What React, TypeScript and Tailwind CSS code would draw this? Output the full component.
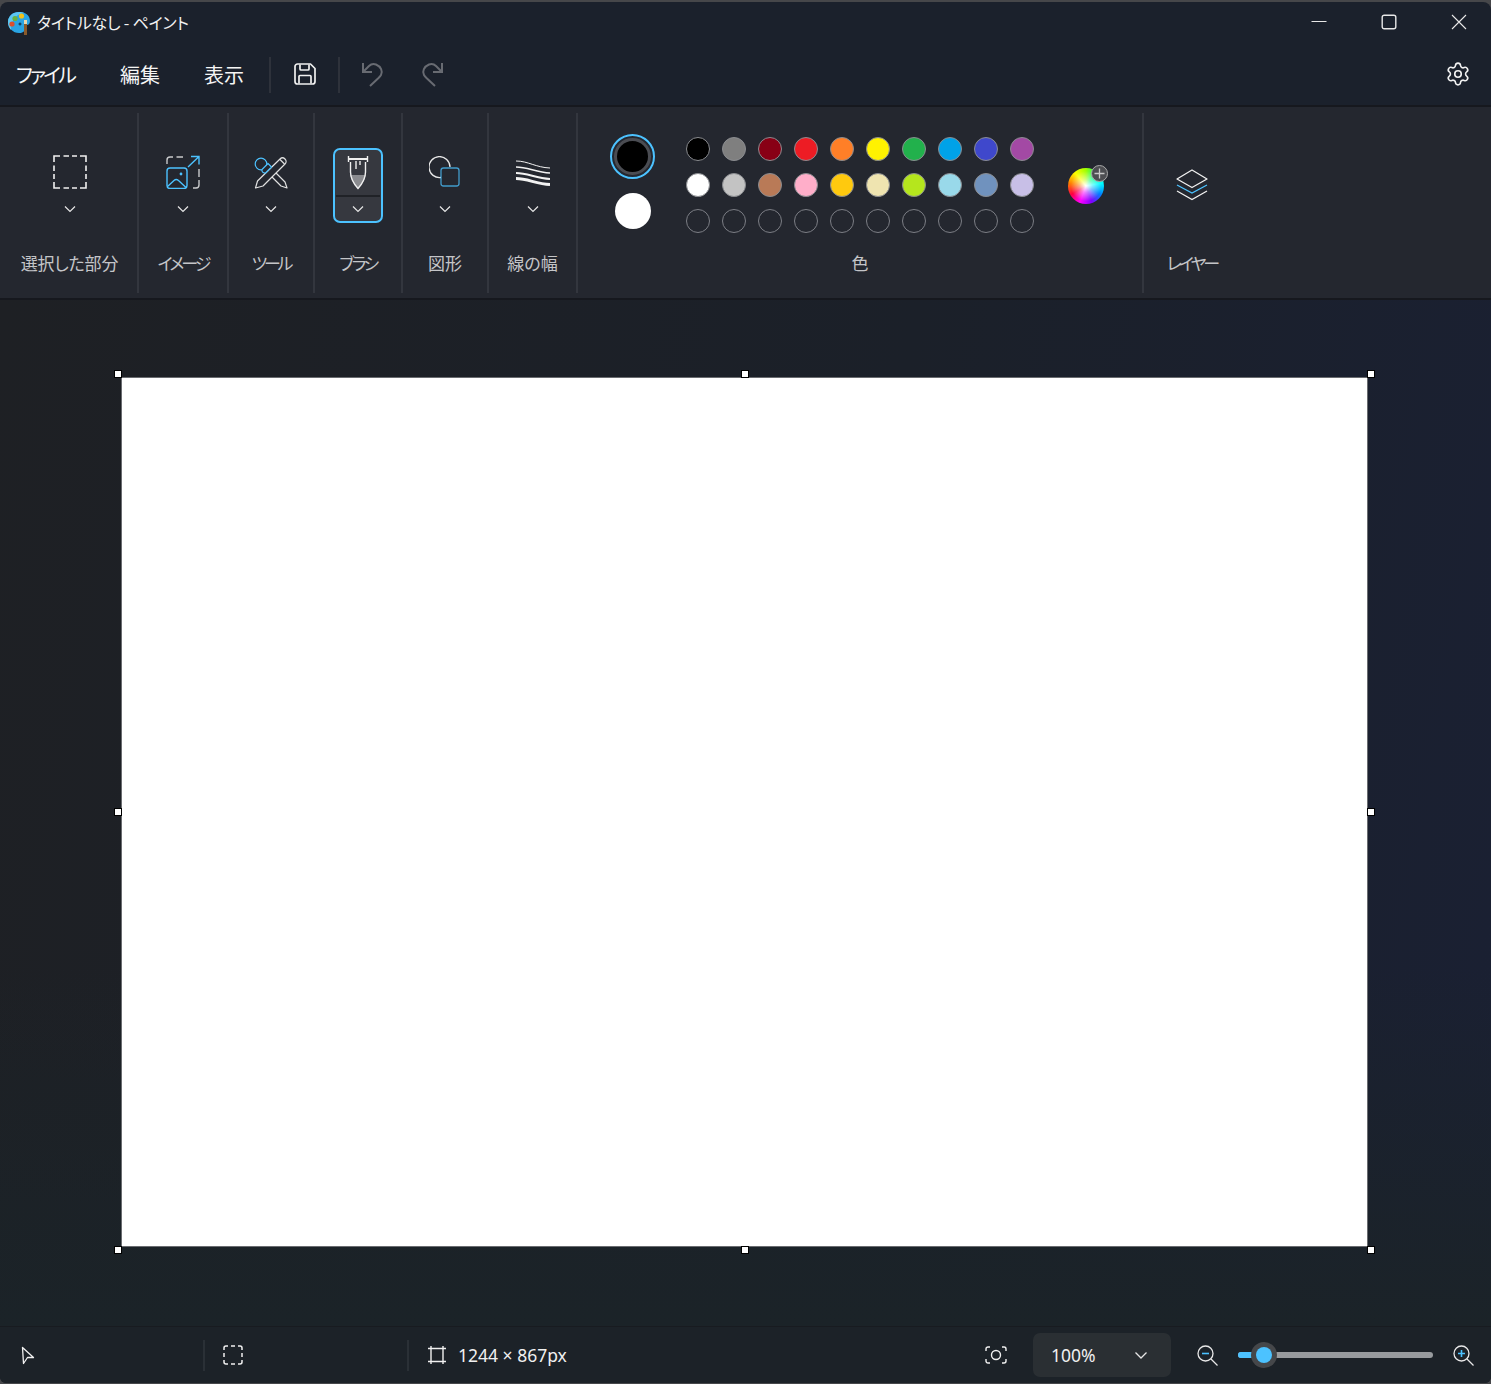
import React from "react";
import { Settings } from "lucide-react";

const chevron = (
  <svg width="12" height="8" viewBox="0 0 12 8" fill="none" stroke="#e6e6e6" strokeWidth="1.2">
    <path d="M1 1.5l5 5 5-5" />
  </svg>
);

function Group({ w, label, icon, extra }: { w: string; label: string; icon: React.ReactNode; extra?: string }) {
  return (
    <div className={`${w} h-[180px] flex flex-col items-center shrink-0 border-r-2 border-[#33363e]`}>
      <div className="h-[36px] mt-[41px] flex items-center justify-center">{icon}</div>
      <div className="h-[12px] mt-[13px] flex items-center justify-center">{chevron}</div>
      <div className={`mt-[36px] text-[17px] leading-[24px] text-[#c4c5c8] whitespace-nowrap ${extra ?? ""}`}>{label}</div>
    </div>
  );
}

const row1 = ["#000000", "#7f7f7f", "#880015", "#ed1c24", "#ff7f27", "#fff200", "#22b14c", "#00a2e8", "#3f48cc", "#a349a4"];
const row2 = ["#ffffff", "#c3c3c3", "#b97a57", "#ffaec9", "#ffc90e", "#efe4b0", "#b5e61d", "#99d9ea", "#7092be", "#c8bfe7"];

function Handle({ pos }: { pos: string }) {
  return <div className={`absolute w-[8px] h-[8px] bg-white border border-black ${pos}`} />;
}

export default function App() {
  return (
    <div
      className="w-[1491px] h-[1384px] bg-[#46474a] pt-[2px] pb-[1px] text-white overflow-hidden"
      style={{ fontFamily: '"Noto Sans CJK JP", "Noto Sans", sans-serif', fontFeatureSettings: '"palt"' }}
    >
      <div className="h-full rounded-t-[8px] rounded-b-[6px] overflow-hidden flex flex-col bg-[#1b212c]">
        {/* title bar */}
        <div className="h-[40px] flex items-center shrink-0">
          <div className="ml-[7px] mt-[2px]">
            <svg width="24" height="26" viewBox="0 0 24 26">
              <path d="M1 12C1 6 6 2 12 2c6 0 11 3 11 9 0 3-2 4-3 4v0c-2 0-2 1-2 3 0 3-2 5-6 5C6 23 1 18 1 12z" fill="#29a4e4" />
              <path d="M1 12C1 6 6 2 12 2c2 0 4 .3 5 1C10 4 4 9 4 20 2 18 1 15 1 12z" fill="#5cc6f2" />
              <circle cx="5" cy="14" r="2.6" fill="#d9502e" />
              <circle cx="8" cy="8.5" r="2.6" fill="#6ab23e" />
              <circle cx="14.5" cy="6" r="2.6" fill="#f2c21a" />
              <path d="M11.5 14h3M13 12.5v3" stroke="#123" strokeWidth="1" />
              <rect x="17" y="10" width="3" height="4" fill="#e8d9b0" />
              <rect x="17" y="14" width="3" height="11" fill="#8a5a2b" />
            </svg>
          </div>
          <div className="ml-[6px] text-[16px] tracking-[-0.2px] leading-[24px] text-[#f2f2f2] whitespace-nowrap">タイトルなし - ペイント</div>
          <div className="ml-auto flex items-center gap-[54px] pr-[24px]">
            <svg width="16" height="16" viewBox="0 0 16 16" stroke="#e8e8e8" strokeWidth="1" fill="none">
              <path d="M0.5 7.5h15" />
            </svg>
            <svg width="16" height="16" viewBox="0 0 16 16" stroke="#e8e8e8" strokeWidth="1.4" fill="none">
              <rect x="1.2" y="1.2" width="13.6" height="13.6" rx="2" />
            </svg>
            <svg width="16" height="16" viewBox="0 0 16 16" stroke="#e8e8e8" strokeWidth="1.1" fill="none">
              <path d="M1 1l14 14M15 1L1 15" />
            </svg>
          </div>
        </div>

        {/* menu bar */}
        <div className="h-[63px] flex items-center shrink-0 text-[20px] text-[#f5f5f5]">
          <div className="ml-[16px] w-[104px] mt-[3px] leading-[28px] tracking-[-2.8px]">ファイル</div>
          <div className="w-[84px] mt-[3px] leading-[28px]">編集</div>
          <div className="w-[65px] mt-[3px] leading-[28px]">表示</div>
          <div className="w-[2px] h-[36px] bg-[#2e323b] mt-[3px]" />
          <div className="w-[67px] flex justify-center">
            <svg width="24" height="24" viewBox="0 0 24 24" fill="none" stroke="#f0f0f0" strokeWidth="1.7" strokeLinejoin="round">
              <path d="M4.5 2h13l4.5 4.5V19.5a2.5 2.5 0 0 1-2.5 2.5h-15A2.5 2.5 0 0 1 2 19.5v-15A2.5 2.5 0 0 1 4.5 2z" />
              <path d="M7 2.5v4.5a1 1 0 0 0 1 1h7a1 1 0 0 0 1-1V2.5M6 21.5v-7a1 1 0 0 1 1-1h10a1 1 0 0 1 1 1v7" />
            </svg>
          </div>
          <div className="w-[2px] h-[36px] bg-[#2e323b] mt-[3px]" />
          <div className="ml-[21px]">
            <svg width="24" height="26" viewBox="0 0 24 26" fill="none" stroke="#686b72" strokeWidth="2">
              <path d="M2 2v9h9" />
              <path d="M2.5 10.5L8 5c2-2 4.5-2.5 7-1.500 5 2 7 7 5 10.500-.7 1.200-1.500 2-2.500 3L9 25" />
            </svg>
          </div>
          <div className="ml-[35px]">
            <svg width="24" height="26" viewBox="0 0 24 26" fill="none" stroke="#686b72" strokeWidth="2">
              <path d="M22 2v9h-9" />
              <path d="M21.500 10.500L16 5c-2-2-4.500-2.500-7-1.500-5 2-7 7-5 10.500.7 1.200 1.500 2 2.500 3L15 25" />
            </svg>
          </div>
          <div className="ml-auto mr-[20px]">
            <Settings size={26} strokeWidth={1.5} color="#f0f0f0" />
          </div>
        </div>

        {/* ribbon */}
        <div className="h-[195px] shrink-0 bg-[#24272f] border-y-2 border-[#16181e] flex items-start pt-[6px]">
          <Group
            w="w-[139px] pl-[2px]"
            label="選択した部分"
            extra="tracking-[-0.2px]"
            icon={
              <svg width="34" height="34" viewBox="0 0 34 34" fill="none" stroke="#f0f0f0" strokeWidth="1.6">
                <path d="M1 7V1h6M10.500 1h5.500M19 1h5M27 1h6v6M33 10.500v5.500M33 19v5M33 27v6h-6M24 33h-5M16 33h-5.500M7 33H1v-6M1 24v-5M1 16v-5.500" />
              </svg>
            }
          />
          <Group
            w="w-[90px]"
            label="イメージ"
            extra="tracking-[-3px]"
            icon={
              <svg width="34" height="34" viewBox="0 0 34 34" fill="none" strokeWidth="1.4">
                <path d="M1 9V5a3 3 0 0 1 3-3h3M10.500 2h6.500M33 14v8M33 25v5a3 3 0 0 1-3 3h-3" stroke="#c9cacc" />
                <path d="M22 12L33 1.500M25 1.500h8v8" stroke="#4cc2ff" />
                <rect x="1" y="13" width="20" height="20.500" rx="3" stroke="#4cc2ff" />
                <path d="M1.500 31.500L8 25.500c1.500-1.300 3-1.300 4.500 0L20 32.500" stroke="#4cc2ff" />
                <circle cx="15" cy="19" r="1.400" fill="#4cc2ff" stroke="none" />
              </svg>
            }
          />
          <Group
            w="w-[86px]"
            label="ツール"
            extra="tracking-[-3.2px]"
            icon={
              <svg width="34" height="34" viewBox="0 0 34 34" fill="none" strokeWidth="1.200" strokeLinejoin="round">
                <path d="M17 13L31 27l2 6-6-2L13 17" stroke="#e0e0e0" />
                <path d="M1.500 33L3.500 26 26 4c1.500-1.500 3.500-1.500 5 0s1.500 3.500 0 5L9 31z" stroke="#e0e0e0" fill="#24272f" />
                <path d="M26 4.500l4.500 4.500" stroke="#e0e0e0" />
                <circle cx="7" cy="9" r="5.800" stroke="#4cc2ff" fill="#24272f" />
                <path d="M8 14.500l6-6 3.500 3.500-6 6c-2.500.3-4-1.500-3.500-3.500z" stroke="#4cc2ff" fill="#24272f" />
              </svg>
            }
          />
          <div className="w-[88px] h-[180px] flex flex-col items-center shrink-0 border-r-2 border-[#33363e]">
            <div className="mt-[35px] w-[50px] h-[75px] rounded-[7px] border-2 border-[#4cc2ff] bg-[#36383f] flex flex-col p-[1px]">
              <div className="h-[46px] flex items-center justify-center border-b-2 border-[#202227]">
                <svg width="22" height="36" viewBox="0 0 22 36" fill="none" stroke="#f0f0f0" strokeWidth="1.400">
                  <path d="M3.500 20h15c-.5 5-3 9-7.500 13C6.500 29 4 25 3.500 20z" fill="#8a8b8f" stroke="none" />
                  <path d="M1.500 1v6M20.500 1v6" />
                  <path d="M1.500 4h19" strokeWidth="1.800" />
                  <path d="M3.500 7v10c0 6 3 11.500 7.500 16.500 4.500-5 7.500-10.500 7.500-16.500V7" />
                  <path d="M9 6v8M13 6v4" />
                </svg>
              </div>
              <div className="flex-1 flex items-center justify-center">{chevron}</div>
            </div>
            <div className="mt-[28px] text-[17px] leading-[24px] tracking-[-2.6px] text-[#c4c5c8] whitespace-nowrap">ブラシ</div>
          </div>
          <Group
            w="w-[86px]"
            label="図形"
            icon={
              <svg width="32" height="32" viewBox="0 0 32 32" fill="none" strokeWidth="1.300">
                <path d="M12 21.500A10.500 10.500 0 1 1 21 11" stroke="#e6e6e6" />
                <rect x="12" y="12" width="18" height="18" rx="2.500" stroke="#4cc2ff" strokeOpacity="0.75" />
              </svg>
            }
          />
          <Group
            w="w-[89px]"
            label="線の幅"
            icon={
              <svg width="36" height="28" viewBox="0 0 36 28" fill="none" stroke="#f2f2f2">
                <path d="M1 3c12 0 20 6.500 34 7" strokeWidth="1" />
                <path d="M1 9c12 0 20 5.500 34 6" strokeWidth="1.600" />
                <path d="M1 15c12 0 20 5.500 34 6" strokeWidth="2.200" />
                <path d="M1 20.500c12 0 20 5.500 34 6" strokeWidth="2.800" />
              </svg>
            }
          />
          <div className="w-[566px] h-[180px] shrink-0 border-r-2 border-[#33363e] flex flex-col">
            <div className="h-[138px] flex">
              <div className="w-[108px] flex flex-col items-center pl-[1px]">
                <div className="mt-[21px] w-[45px] h-[45px] rounded-full border-2 border-[#4cc2ff] flex items-center justify-center">
                  <div className="w-[37px] h-[37px] rounded-full bg-black border-[3px] border-[#4a4c52]" />
                </div>
                <div className="mt-[14px] w-[36px] h-[36px] rounded-full bg-white" />
              </div>
              <div className="mt-[24px] grid grid-cols-10 gap-[12px] h-fit w-[348px] shrink-0">
                {row1.concat(row2).map((c, i) => (
                  <div key={i} className="w-[24px] h-[24px] rounded-full border border-[#8a8c90]" style={{ background: c }} />
                ))}
                {Array.from({ length: 10 }).map((_, i) => (
                  <div key={i} className="w-[24px] h-[24px] rounded-full border-[1.5px] border-[#7c7e85]" />
                ))}
              </div>
              <div className="ml-[34px] mt-[55px] relative w-[36px] h-[36px]">
                <div className="w-[36px] h-[36px] rounded-full bg-[radial-gradient(circle,#ffffff_0%,rgba(255,255,255,0.5)_25%,rgba(255,255,255,0)_60%),conic-gradient(from_0deg,#a0ff00,#00ff80,#00ffff,#0080ff,#8000ff,#ff00ff,#ff0040,#ff8000,#ffff00,#a0ff00)]" />
                <div className="absolute -top-[3px] -right-[4px] w-[17px] h-[17px] rounded-full bg-[#4d4e52] border border-[#a8a8a8] flex items-center justify-center">
                  <svg width="11" height="11" viewBox="0 0 11 11" stroke="#c8c8c8" strokeWidth="1.300">
                    <path d="M5.500 0.500v10M0.500 5.500h10" />
                  </svg>
                </div>
              </div>
            </div>
            <div className="text-center text-[17px] leading-[24px] text-[#c4c5c8]">色</div>
          </div>
          <div className="w-[96px] h-[180px] flex flex-col items-center shrink-0">
            <div className="mt-[56px] h-[32px]">
              <svg width="32" height="32" viewBox="0 0 32 32" fill="none" strokeWidth="1.300">
                <path d="M16 1L31 10 16 18.500 1 10z" stroke="#f0f0f0" strokeLinejoin="round" />
                <path d="M1 16l15 8 15-8" stroke="#4cc2ff" />
                <path d="M1 22l15 8.500 15-8.500" stroke="#f0f0f0" />
              </svg>
            </div>
            <div className="mt-[50px] text-[17px] leading-[24px] tracking-[-3px] text-[#c4c5c8] whitespace-nowrap">レイヤー</div>
          </div>
        </div>

        {/* canvas area */}
        <div className="flex-1 min-h-0 bg-[linear-gradient(to_bottom,rgba(27,35,40,0)_65%,#1b2328_100%),linear-gradient(100deg,#1e2024_0%,#1b2029_55%,#1a2033_100%)] pl-[122px] pt-[78px]">
          <div className="relative w-[1245px] h-[868px] bg-white shadow-[0_0_0_1px_#6a6c70]">
            <Handle pos="-left-[8px] -top-[8px]" />
            <Handle pos="left-[619px] -top-[8px]" />
            <Handle pos="-right-[8px] -top-[8px]" />
            <Handle pos="-left-[8px] top-[430px]" />
            <Handle pos="-right-[8px] top-[430px]" />
            <Handle pos="-left-[8px] -bottom-[8px]" />
            <Handle pos="left-[619px] -bottom-[8px]" />
            <Handle pos="-right-[8px] -bottom-[8px]" />
          </div>
        </div>

        {/* status bar */}
        <div
          className="h-[57px] shrink-0 bg-[#1c2228] border-t border-[#181b20] flex items-center text-[17.5px] text-[#f0f0f0]"
          style={{ fontFamily: '"Noto Sans", sans-serif' }}
        >
          <div className="w-[205px] h-[31px] border-r-2 border-[#2a3036] flex items-center pl-[21px]">
            <svg width="14" height="19" viewBox="0 0 14 19" fill="none" stroke="#f0f0f0" strokeWidth="1.300" strokeLinejoin="round">
              <path d="M1.500 1.500L12.500 11.500H6.500L2.500 17.500z" />
            </svg>
          </div>
          <div className="w-[204px] h-[31px] border-r-2 border-[#2a3036] flex items-center pl-[18px]">
            <svg width="20" height="20" viewBox="0 0 20 20" fill="none" stroke="#f0f0f0" strokeWidth="1.500">
              <path d="M1 5V3a2 2 0 0 1 2-2h2M8 1h4M15 1h2a2 2 0 0 1 2 2v2M19 8v4M19 15v2a2 2 0 0 1-2 2h-2M12 19H8M5 19H3a2 2 0 0 1-2-2v-2M1 12V8" />
            </svg>
          </div>
          <div className="ml-[19px]">
            <svg width="18" height="18" viewBox="0 0 18 18" fill="none" stroke="#f0f0f0" strokeWidth="1.400">
              <path d="M3 0v18M15 0v18M0 2.500h18M0 15.500h18" />
            </svg>
          </div>
          <div className="ml-[12px] whitespace-nowrap">1244 × 867px</div>
          <div className="ml-auto flex items-center">
            <svg width="22" height="18" viewBox="0 0 22 18" fill="none" stroke="#f0f0f0" strokeWidth="1.400">
              <path d="M1 5V3a2 2 0 0 1 2-2h2M17 1h2a2 2 0 0 1 2 2v2M21 13v2a2 2 0 0 1-2 2h-2M5 17H3a2 2 0 0 1-2-2v-2" />
              <circle cx="11" cy="9" r="4.500" />
            </svg>
            <div className="ml-[26px] w-[138px] h-[44px] rounded-[7px] bg-[#2a2f33] flex items-center pl-[18px] pr-[24px] justify-between">
              <span>100%</span>
              <svg width="12" height="8" viewBox="0 0 12 8" fill="none" stroke="#e6e6e6" strokeWidth="1.300">
                <path d="M0.500 1.500l5.500 5.500 5.500-5.500" />
              </svg>
            </div>
            <div className="ml-[26px]">
              <svg width="21" height="21" viewBox="0 0 21 21" fill="none" stroke="#e8e8e8" strokeWidth="1.300">
                <circle cx="8.500" cy="8.500" r="7.500" />
                <path d="M14 14l6.500 6.500" />
                <path d="M5 8.500h7" stroke="#4cc2ff" strokeWidth="1.600" />
              </svg>
            </div>
            <div className="ml-[20px] w-[195px] h-[6px] rounded-full bg-[#989b9e] relative">
              <div className="w-[26px] h-[6px] rounded-l-full bg-[#4cc2ff]" />
              <div className="absolute left-[13px] -top-[10px] w-[26px] h-[26px] rounded-full bg-[#45474a] flex items-center justify-center">
                <div className="w-[16px] h-[16px] rounded-full bg-[#4cc2ff]" />
              </div>
            </div>
            <div className="ml-[20px] mr-[17px]">
              <svg width="21" height="21" viewBox="0 0 21 21" fill="none" stroke="#e8e8e8" strokeWidth="1.300">
                <circle cx="8.500" cy="8.500" r="7.500" />
                <path d="M14 14l6.500 6.500" />
                <path d="M5 8.500h7M8.500 5v7" stroke="#4cc2ff" strokeWidth="1.600" />
              </svg>
            </div>
          </div>
        </div>
      </div>
    </div>
  );
}
